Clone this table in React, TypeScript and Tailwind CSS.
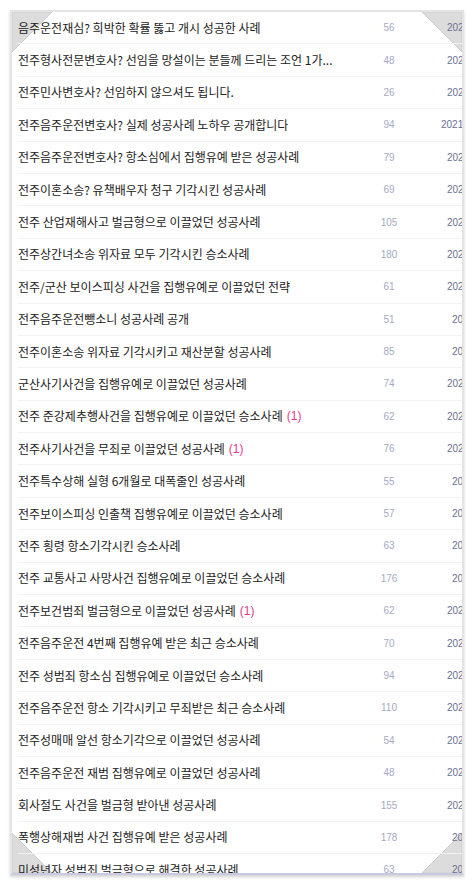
const posts = [
  { title: "음주운전재심? 희박한 확률 뚫고 개시 성공한 사례", views: 56, date: "2023.06.12", dateCls: "pl-[9px]" },
  { title: "전주형사전문변호사? 선임을 망설이는 분들께 드리는 조언 1가...", views: 48, date: "2023.06.05", dateCls: "pl-[9px]" },
  { title: "전주민사변호사? 선임하지 않으셔도 됩니다.", views: 26, date: "2023.05.30", dateCls: "pl-[9px]" },
  { title: "전주음주운전변호사? 실제 성공사례 노하우 공개합니다", views: 94, date: "2021.12.27", dateCls: "pl-[3px]" },
  { title: "전주음주운전변호사? 항소심에서 집행유예 받은 성공사례", views: 79, date: "2023.05.18", dateCls: "pl-[9px]" },
  { title: "전주이혼소송? 유책배우자 청구 기각시킨 성공사례", views: 69, date: "2023.05.11", dateCls: "pl-[9px]" },
  { title: "전주 산업재해사고 벌금형으로 이끌었던 성공사례", views: 105, date: "2023.05.04", dateCls: "pl-[9px]" },
  { title: "전주상간녀소송 위자료 모두 기각시킨 승소사례", views: 180, date: "2023.04.27", dateCls: "pl-[9px]" },
  { title: "전주/군산 보이스피싱 사건을 집행유예로 이끌었던 전략", views: 61, date: "2023.04.20", dateCls: "pl-[9px]" },
  { title: "전주음주운전뺑소니 성공사례 공개", views: 51, date: "2023.4.13", dateCls: "pl-[14px]" },
  { title: "전주이혼소송 위자료 기각시키고 재산분할 성공사례", views: 85, date: "2023.4.06", dateCls: "pl-[14px]" },
  { title: "군산사기사건을 집행유예로 이끌었던 성공사례", views: 74, date: "2023.03.30", dateCls: "pl-[9px]" },
  { title: "전주 준강제추행사건을 집행유예로 이끌었던 승소사례", comments: 1, views: 62, date: "2023.03.23", dateCls: "pl-[9px]" },
  { title: "전주사기사건을 무죄로 이끌었던 성공사례", comments: 1, views: 76, date: "2023.03.16", dateCls: "pl-[9px]" },
  { title: "전주특수상해 실형 6개월로 대폭줄인 성공사례", views: 55, date: "2023.3.09", dateCls: "pl-[14px]" },
  { title: "전주보이스피싱 인출책 집행유예로 이끌었던 승소사례", views: 57, date: "2023.3.02", dateCls: "pl-[14px]" },
  { title: "전주 횡령 항소기각시킨 승소사례", views: 63, date: "2023.2.23", dateCls: "pl-[14px]" },
  { title: "전주 교통사고 사망사건 집행유예로 이끌었던 승소사례", views: 176, date: "2023.2.16", dateCls: "pl-[14px]" },
  { title: "전주보건범죄 벌금형으로 이끌었던 성공사례", comments: 1, views: 62, date: "2023.02.09", dateCls: "pl-[9px]" },
  { title: "전주음주운전 4번째 집행유예 받은 최근 승소사례", views: 70, date: "2023.02.02", dateCls: "pl-[9px]" },
  { title: "전주 성범죄 항소심 집행유예로 이끌었던 승소사례", views: 94, date: "2023.01.26", dateCls: "pl-[9px]" },
  { title: "전주음주운전 항소 기각시키고 무죄받은 최근 승소사례", views: 110, date: "2023.01.19", dateCls: "pl-[9px]" },
  { title: "전주성매매 알선 항소기각으로 이끌었던 성공사례", views: 54, date: "2023.01.12", dateCls: "pl-[9px]" },
  { title: "전주음주운전 재범 집행유예로 이끌었던 성공사례", views: 48, date: "2023.01.05", dateCls: "pl-[9px]" },
  { title: "회사절도 사건을 벌금형 받아낸 성공사례", views: 155, date: "2022.12.29", dateCls: "pl-[9px]" },
  { title: "폭행상해재범 사건 집행유예 받은 성공사례", views: 178, date: "2022.1.22", dateCls: "pl-[14px]" },
  { title: "미성년자 성범죄 벌금형으로 해결한 성공사례", views: 63, date: "2022.1.15", dateCls: "pl-[14px]" },
];

const Corner = ({ className, points }: { className: string; points: string }) => (
  <svg
    className={`pointer-events-none absolute h-[40px] w-[40px] ${className}`}
    viewBox="0 0 40 40"
  >
    <polygon points={points} fill="#dcdcdc" stroke="#cdcdcd" strokeWidth="1" />
  </svg>
);

export default function App() {
  return (
    <div className="min-h-[886px] w-[476px] bg-white pl-[10px] pr-[12px] pt-[10px]">
      <div className="relative h-[865px] overflow-hidden border-2 border-[#e4e4e4] border-b-[#c9cadf] bg-white shadow-[0_2px_3px_rgba(0,0,0,0.18)]">
        {/* folded corners */}
        <Corner className="left-0 top-0" points="0,0 40,0 0,40" />
        <Corner className="right-0 top-0" points="0,0 40,0 40,40" />
        <Corner className="bottom-0 left-0" points="0,0 0,40 40,40" />
        <Corner className="bottom-0 right-0" points="40,0 40,40 0,40" />

        <ul className="relative w-[540px] pl-[6px]">
          {posts.map((post, index) => (
            <li
              key={index}
              className="flex h-[32.4px] items-center border-b border-[#f2f2f4]"
            >
              <div className="flex w-[322px] shrink-0 items-center [font-family:'Noto_Sans_CJK_KR',sans-serif] text-[12px] text-[#222]">
                <span className="truncate">{post.title}</span>
                {post.comments && (
                  <span className="ml-[4px] shrink-0 text-[#e23a8c] [font-family:'Liberation_Sans',sans-serif]">
                    ({post.comments})
                  </span>
                )}
              </div>
              <div className="w-[98px] shrink-0 text-center [font-family:'Liberation_Sans',sans-serif] text-[10px] text-[#a5aac6]">
                {post.views}
              </div>
              <div
                className={`w-[100px] shrink-0 whitespace-nowrap [font-family:'Liberation_Sans',sans-serif] text-[10px] text-[#6a7192] ${post.dateCls}`}
              >
                {post.date}
              </div>
            </li>
          ))}
        </ul>
      </div>
    </div>
  );
}
